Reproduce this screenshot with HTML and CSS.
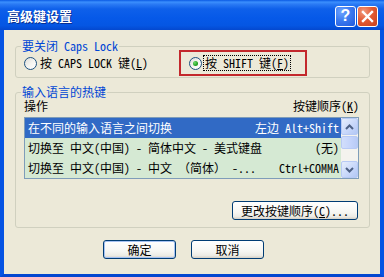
FILE: index.html
```html
<!DOCTYPE html>
<html lang="zh-CN">
<head>
<meta charset="utf-8">
<title>高级键设置</title>
<link rel="stylesheet" href="styles.css">
</head>
<body>
<div class="window">
  <div class="titlebar">
    <span class="title">高级键设置</span>
    <div class="caption-btns">
      <span class="cbtn help">?</span>
      <span class="cbtn close"><svg width="13" height="13" viewBox="0 0 13 13"><path d="M2 2 L11 11 M11 2 L2 11" stroke="#fff" stroke-width="2.4" stroke-linecap="square"/></svg></span>
    </div>
  </div>
  <div class="frame">
    <fieldset class="group g1">
      <legend>要关闭 Caps Lock</legend>
      <div class="radio-row">
        <label class="radio first"><span class="dot"></span><span class="lbl">按 CAPS LOCK 键(<u>L</u>)</span></label>
        <div class="highlight">
          <label class="radio checked"><span class="dot"></span><span class="lbl focus">按 SHIFT 键(<u>F</u>)</span></label>
        </div>
      </div>
    </fieldset>
    <fieldset class="group g2">
      <legend>输入语言的热键</legend>
      <div class="list-head"><span>操作</span><span>按键顺序(<u>K</u>)</span></div>
      <div class="listbox">
        <div class="rows">
          <div class="row sel"><span>在不同的输入语言之间切换</span><span>左边 Alt+Shift</span></div>
          <div class="row"><span>切换至 中文(中国) - 简体中文 - 美式键盘</span><span>(无)</span></div>
          <div class="row"><span>切换至 中文(中国) - 中文 （简体） -...</span><span>Ctrl+COMMA</span></div>
        </div>
        <div class="scrollbar">
          <div class="sb-btn"><svg width="9" height="6" viewBox="0 0 9 6"><path d="M1 5 L4.5 1.5 L8 5" fill="none" stroke="#4D6185" stroke-width="2"/></svg></div>
          <div class="sb-track"><div class="sb-thumb"></div></div>
          <div class="sb-btn"><svg width="9" height="6" viewBox="0 0 9 6"><path d="M1 1 L4.5 4.5 L8 1" fill="none" stroke="#4D6185" stroke-width="2"/></svg></div>
        </div>
      </div>
      <div class="change-row"><button class="btn wide">更改按键顺序(<u>C</u>)...</button></div>
    </fieldset>
    <div class="actions">
      <button class="btn default">确定</button>
      <button class="btn">取消</button>
    </div>
  </div>
</div>
</body>
</html>
```

FILE: styles.css
```css
* { box-sizing: border-box; }
html, body { margin: 0; padding: 0; }
body {
  font-family: "Noto Sans Mono CJK SC", "Noto Sans CJK SC", monospace;
  font-size: 12px;
  color: #000;
  background: #0553E3;
}
.window {
  width: 384px;
  height: 277px;
  display: flex;
  flex-direction: column;
  overflow: hidden;
}
.titlebar {
  height: 30px;
  flex: none;
  display: flex;
  align-items: center;
  justify-content: space-between;
  padding: 0 6px 0 7px;
  background: linear-gradient(to bottom, #0A5AE4 0%, #3B8FFD 7%, #2A7AF4 14%, #0E60EA 30%, #0659E8 60%, #0556E3 85%, #0448CF 100%);
}
.title {
  color: #fff;
  font-family: "Noto Sans CJK SC", sans-serif;
  font-weight: bold;
  font-size: 13px;
  line-height: 16px;
  text-shadow: 1px 1px 0 #0A2F8F;
  margin-top: 1px;
}
.caption-btns {
  display: flex;
  gap: 1px;
  margin-top: 2px;
}
.cbtn {
  width: 21px;
  height: 21px;
  border: 1px solid #fff;
  border-radius: 3px;
  display: flex;
  align-items: center;
  justify-content: center;
}
.help {
  background: radial-gradient(circle at 30% 25%, #6FA4FF 0%, #3C7BF0 45%, #1F58DC 100%);
  color: #fff;
  font-family: "Liberation Sans", sans-serif;
  font-weight: bold;
  font-size: 16px;
  line-height: 1;
}
.close {
  background: radial-gradient(circle at 30% 25%, #F29A7E 0%, #E25B35 45%, #C8401D 100%);
}
.frame {
  flex: 1;
  background: #ECE9D8;
  border-left: 4px solid #0553E3;
  border-right: 4px solid #0553E3;
  border-bottom: 3px solid #0447D0;
  padding: 10px 10px 0 11px;
}
.group {
  margin: 0;
  min-width: 0;
  border: 1px solid #D0D0BF;
  border-radius: 3px;
}
.group legend {
  color: #0046D5;
  line-height: 12px;
  padding: 0 1px;
  margin-left: -3px;
}
.g1 { padding: 0 8px 1px 8px; }
.radio-row {
  display: flex;
  align-items: center;
  margin-top: -2px;
}
.radio {
  display: inline-flex;
  align-items: center;
  white-space: nowrap;
}
.radio.first { width: 155px; }
.dot {
  width: 13px;
  height: 13px;
  border-radius: 50%;
  border: 1px solid #1C5180;
  background: linear-gradient(135deg, #DCDCD7 0%, #F4F4F0 50%, #FFFFFF 100%);
  margin-right: 3px;
  position: relative;
  flex: none;
}
.checked .dot { margin-right: 2px; }
.checked .dot::after {
  content: "";
  position: absolute;
  left: 3px;
  top: 3px;
  width: 5px;
  height: 5px;
  border-radius: 50%;
  background: radial-gradient(circle at 35% 35%, #6DDB6D 0%, #21A121 60%, #1A8A1A 100%);
}
.lbl { line-height: 14px; }
.lbl.focus {
  outline: 1px dotted #000;
  padding: 0 1px;
}
.highlight {
  width: 128px;
  height: 26px;
  border: 2px solid #C3282C;
  padding-left: 8px;
  display: flex;
  align-items: center;
}
.g2 {
  margin-top: 8px;
  padding: 0 10px 7px 8px;
}
.list-head {
  margin-top: 2px;
  height: 12px;
  line-height: 12px;
  display: flex;
  justify-content: space-between;
}
.listbox {
  margin-top: 5px;
  height: 62px;
  border: 1px solid #7F9DB9;
  background: #D5E9D3;
  display: flex;
}
.rows {
  flex: 1;
  min-width: 0;
}
.row {
  height: 20px;
  line-height: 20px;
  padding: 0 2px 0 3px;
  display: flex;
  justify-content: space-between;
  white-space: nowrap;
  overflow: hidden;
}
.row.sel {
  background: #316AC5;
  color: #fff;
}
.scrollbar {
  width: 17px;
  flex: none;
  display: flex;
  flex-direction: column;
  background: #F4F3EE;
}
.sb-btn {
  height: 17px;
  flex: none;
  border: 1px solid #B7CAF5;
  border-radius: 2px;
  background: linear-gradient(135deg, #E6EEFC 0%, #C6D6FA 60%, #B2C7F4 100%);
  display: flex;
  align-items: center;
  justify-content: center;
}
.sb-track {
  flex: 1;
  padding-top: 1px;
}
.sb-thumb {
  height: 13px;
  border: 1px solid #B7CAF5;
  border-radius: 2px;
  background: linear-gradient(90deg, #D2DEFB 0%, #C3D3FB 60%, #B8CBF6 100%);
}
.change-row {
  margin-top: 22px;
  display: flex;
  justify-content: flex-end;
  padding-right: 1px;
}
.btn {
  font: inherit;
  color: #000;
  height: 19px;
  padding: 0;
  border: 1px solid #003C74;
  border-radius: 3px;
  background: linear-gradient(to bottom, #FFFFFF 0%, #F6F6F2 60%, #ECEBE5 85%, #D6D0C5 100%);
  line-height: 16px;
  text-align: center;
}
.btn.wide { width: 126px; }
.actions {
  margin-top: 12px;
  display: flex;
  gap: 15px;
  padding-left: 88px;
}
.actions .btn { width: 73px; }
.btn.default {
  box-shadow: inset 0 0 0 1px #A6C2F2;
}
```
